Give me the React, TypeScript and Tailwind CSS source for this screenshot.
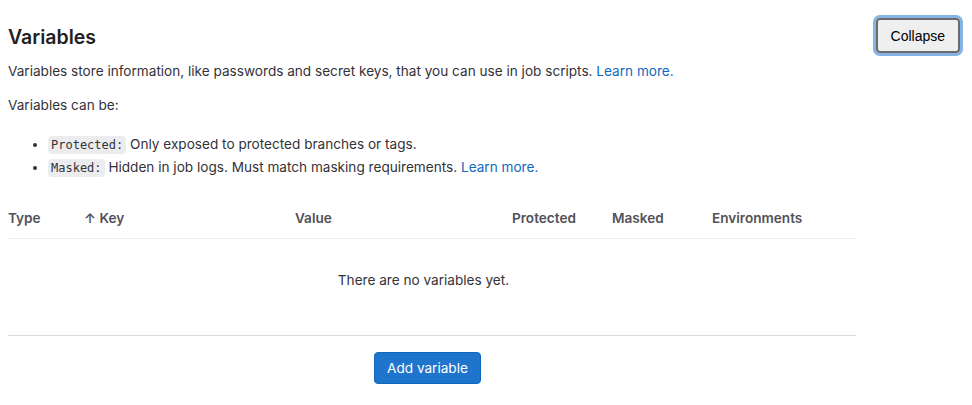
import React from "react";

export default function App() {
  const cols = [
    { label: "Type", w: "w-[76px]" },
    { label: "↑ Key", w: "w-[211px]" },
    { label: "Value", w: "w-[217px]" },
    { label: "Protected", w: "w-[100px]" },
    { label: "Masked", w: "w-[100px]" },
    { label: "Environments", w: "flex-1" },
  ];
  return (
    <div
      className="w-[972px] h-[405px] bg-white text-[#333238] text-[13.6px] leading-[20px] overflow-hidden"
      style={{ fontFamily: "Inter, 'Noto Sans', sans-serif" }}
    >
      <div className="flex items-start justify-between pl-2 pr-[9px] pt-[15px]">
        <h2 className="text-[19.5px] leading-[34px] font-semibold text-[#1f1e24] mt-[5px]">Variables</h2>
        <div className="rounded-[7px] border-[3px] border-[#84b3e4]">
          <button className="h-[35px] px-[13px] rounded-[4px] border-2 border-[#6b6b6b] bg-[#efefef] text-[14px] text-black" style={{ fontFamily: "'Liberation Sans', Arial, sans-serif" }}>
            Collapse
          </button>
        </div>
      </div>
      <div className="pl-2">
        <p className="mt-[5px]">
          Variables store information, like passwords and secret keys, that you can use in job scripts.{" "}
          <span className="text-[#1068bf]">Learn more.</span>
        </p>
        <p className="mt-[14px]">Variables can be:</p>
        <ul className="mt-[18px] list-disc pl-[40px]">
          <li className="leading-[22px]">
            <code className="bg-[#ececef] rounded-[4px] px-[3px] py-[2px] text-[12px] text-[#333238]" style={{ fontFamily: "'DejaVu Sans Mono', monospace" }}>Protected:</code>{" "}
            Only exposed to protected branches or tags.
          </li>
          <li className="leading-[22px]">
            <code className="bg-[#ececef] rounded-[4px] px-[3px] py-[2px] text-[12px] text-[#333238]" style={{ fontFamily: "'DejaVu Sans Mono', monospace" }}>Masked:</code>{" "}
            Hidden in job logs. Must match masking requirements. <span className="text-[#1068bf]">Learn more.</span>
          </li>
        </ul>
        <div className="w-[848px] mt-[18px]">
          <div className="flex h-[42px] items-center border-b border-[#ececef] font-semibold text-[#535158]">
            {cols.map((c) => (
              <div key={c.label} className={c.w}>{c.label}</div>
            ))}
          </div>
          <div className="h-[96px] flex justify-center pt-[31px] pr-[17px]">There are no variables yet.</div>
          <div className="border-t border-[#dcdcde]"></div>
          <div className="flex justify-center pt-[16px] pr-[9px]">
            <button className="h-[32px] px-[12px] rounded-[4px] bg-[#1f75cb] text-white text-[13.6px] border border-[#1068bf]">
              Add variable
            </button>
          </div>
        </div>
      </div>
    </div>
  );
}
